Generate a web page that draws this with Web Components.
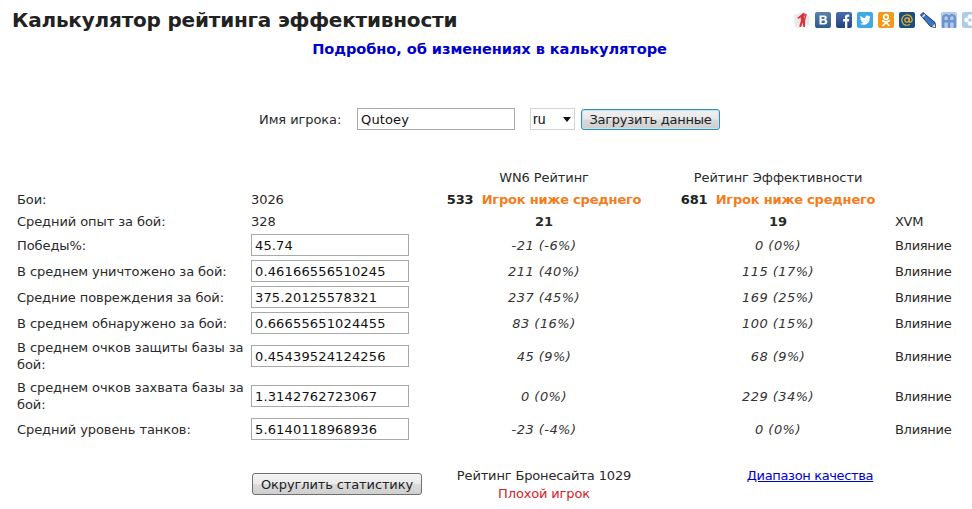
<!DOCTYPE html>
<html lang="ru">
<head>
<meta charset="utf-8">
<title>Калькулятор рейтинга эффективности</title>
<style>
  html, body { margin: 0; padding: 0; background: #fff; overflow: hidden; }
  body { font-family: "DejaVu Sans", Verdana, sans-serif; font-size: 13px; color: #2a2a2a; letter-spacing: -0.08px; }
</style>
</head>
<body>
<rating-page></rating-page>

<script>
const fieldCss = `
  .field {
    box-sizing: border-box;
    height: 22px;
    width: 158px;
    padding: 0 3px;
    border: 1px solid #a9a9a9;
    background: #fff;
    color: #111;
    font: 13px/20px "DejaVu Sans", Verdana, sans-serif;
    letter-spacing: 0.15px;
    outline: none;
  }
`;

const buttonCss = `
  button {
    box-sizing: border-box;
    height: 22px;
    padding: 0;
    border: 1px solid #707070;
    border-radius: 3px;
    background: linear-gradient(#f4f4f4 0%, #ebebeb 48%, #dbdbdb 52%, #cfcfcf 100%);
    color: #222;
    font: 13px "DejaVu Sans", Verdana, sans-serif;
    letter-spacing: -0.12px;
    white-space: nowrap;
  }
`;

class SocialBar extends HTMLElement {
  constructor() {
    super();
    this.attachShadow({ mode: 'open' });
  }

  connectedCallback() {
    this.shadowRoot.innerHTML = `
      <style>
        :host { display: flex; gap: 5px; flex: none; }
        svg { width: 16px; height: 16px; display: block; flex: none; }
      </style>
      <svg viewBox="0 0 16 16">
        <path d="M0 3 L10 0 L16 5 L15 13 L4 16 L1 15 Z" fill="#e9e9e9"/>
        <path d="M8 2 a1.6 1.6 0 1 1 2 2.2 L10 7 L11.5 1.5 L12.8 2 L11 9 L11 15 L9.2 15 L8.8 10.5 L7 15 L5.2 14.4 L7 8.5 L6.6 5.5 L4 7 L3.4 5.8 Z" fill="#d8343a"/>
      </svg>
      <svg viewBox="0 0 16 16">
        <defs><linearGradient id="vk" x1="0" y1="0" x2="0" y2="1"><stop offset="0" stop-color="#5b82ac"/><stop offset="1" stop-color="#2f5a8c"/></linearGradient></defs>
        <rect width="16" height="16" rx="2" fill="url(#vk)"/>
        <path d="M4.5 3.5 H9.5 C11.3 3.5 11.8 4.7 11.8 5.6 C11.8 6.5 11.3 7.2 10.6 7.5 C11.7 7.8 12.3 8.6 12.3 9.7 C12.3 11.2 11.2 12.5 9.4 12.5 H4.5 Z M6.6 5.1 V7 H8.8 C9.4 7 9.7 6.6 9.7 6 C9.7 5.5 9.4 5.1 8.8 5.1 Z M6.6 8.5 V10.9 H9 C9.7 10.9 10.1 10.4 10.1 9.7 C10.1 9 9.7 8.5 9 8.5 Z" fill="#fff"/>
      </svg>
      <svg viewBox="0 0 16 16">
        <defs><linearGradient id="fb" x1="0" y1="0" x2="0" y2="1"><stop offset="0" stop-color="#4a6db0"/><stop offset="1" stop-color="#26407f"/></linearGradient></defs>
        <rect width="16" height="16" rx="2" fill="url(#fb)"/>
        <path d="M9 16 V9.5 H7 V7 H9 V5.2 C9 3.4 10.1 2.4 11.7 2.4 H13.3 V4.7 H12.2 C11.5 4.7 11.3 5 11.3 5.6 V7 H13.2 L12.9 9.5 H11.3 V16 Z" fill="#fff"/>
      </svg>
      <svg viewBox="0 0 16 16">
        <rect width="16" height="16" rx="2" fill="#3fa9e6"/>
        <path d="M13.6 4.5 C13.2 4.7 12.8 4.8 12.3 4.9 C12.8 4.6 13.1 4.2 13.3 3.6 C12.9 3.9 12.4 4.1 11.9 4.2 C11.1 3.3 9.7 3.3 8.9 4.1 C8.3 4.7 8.1 5.4 8.3 6.2 C6.5 6.1 4.8 5.2 3.6 3.8 C3 4.9 3.3 6.2 4.3 6.9 C3.9 6.9 3.6 6.8 3.2 6.6 C3.2 7.8 4.1 8.8 5.2 9.1 C4.9 9.2 4.5 9.2 4.2 9.1 C4.5 10.1 5.4 10.8 6.5 10.8 C5.4 11.6 4.1 12 2.8 11.8 C6.6 14.2 13 12.3 12.6 6 C13 5.6 13.4 5.1 13.6 4.5 Z" fill="#fff"/>
      </svg>
      <svg viewBox="0 0 16 16">
        <rect width="16" height="16" rx="2" fill="#f39a1e"/>
        <g fill="none" stroke="#fff" stroke-width="1.7" stroke-linecap="round">
          <circle cx="8" cy="5" r="2.3"/>
          <path d="M4.8 8.7 C6.6 10 9.4 10 11.2 8.7"/>
          <path d="M8 10 V10.5 M8 10.5 L5 13.5 M8 10.5 L11 13.5"/>
        </g>
      </svg>
      <svg viewBox="0 0 16 16">
        <rect width="16" height="16" rx="2" fill="#174f7f"/>
        <circle cx="8" cy="8" r="2.1" fill="none" stroke="#f3b02e" stroke-width="1.2"/>
        <path d="M10.1 5.8 V9 C10.1 10.8 13.2 10.6 13.2 8 A5.2 5.2 0 1 0 11 12.3" fill="none" stroke="#f3b02e" stroke-width="1.2"/>
      </svg>
      <svg viewBox="0 0 16 16">
        <path d="M0.5 3 L3 0.5 L15 10.5 L15.5 15.5 L10.5 14.5 Z" fill="#3a76c4" stroke="#16335f" stroke-width="1"/>
        <path d="M2.5 5 L5 2.5" stroke="#dfe8f4" stroke-width="1.5"/>
        <path d="M12 14.6 L14.6 12 L15.5 15.5 Z" fill="#f4dcae"/>
      </svg>
      <svg viewBox="0 0 16 16">
        <rect width="16" height="16" rx="2" fill="#b4cbea"/>
        <path d="M1 16 V6 C1 3 3 2 5 2 C6.5 2 7.5 2.6 8 3.5 C8.5 2.6 9.5 2 11 2 C13 2 15 3 15 6 V16 H12.5 V10.5 H9.2 V16 H6.8 V10.5 H3.5 V16 Z M3.5 6 V8 H6.8 V6 C6.8 4.8 6 4.3 5 4.3 C4 4.3 3.5 4.8 3.5 6 Z M9.2 6 V8 H12.5 V6 C12.5 4.8 12 4.3 11 4.3 C10 4.3 9.2 4.8 9.2 6 Z" fill="#6f93cc"/>
      </svg>
      <svg viewBox="0 0 16 16">
        <rect width="16" height="16" rx="2" fill="#a8cdea"/>
        <g fill="#fff">
          <circle cx="8" cy="4.6" r="2.4"/><circle cx="8" cy="11.4" r="2.4"/>
          <circle cx="4.6" cy="8" r="2.4"/><circle cx="11.4" cy="8" r="2.4"/>
        </g>
        <circle cx="8" cy="8" r="1.5" fill="#a8cdea"/>
      </svg>
    `;
  }
}

class StatRow extends HTMLElement {
  constructor() {
    super();
    this.attachShadow({ mode: 'open' });
  }

  connectedCallback() {
    this.shadowRoot.innerHTML = `
      <style>
        :host {
          display: grid;
          grid-template-columns: 234px 158px 270px 198px 1fr;
          align-items: center;
          padding-left: 17px;
          min-height: 26px;
          line-height: 17px;
        }
        .center { text-align: center; white-space: nowrap; }
        .xvm { padding-left: 18px; white-space: nowrap; letter-spacing: -0.3px; }
      </style>
      <div><slot name="label"></slot></div>
      <div><slot name="value"></slot></div>
      <div class="center"><slot name="wn6"></slot></div>
      <div class="center"><slot name="eff"></slot></div>
      <div class="xvm"><slot name="extra"></slot></div>
    `;
  }
}

class StatField extends HTMLElement {
  constructor() {
    super();
    this.attachShadow({ mode: 'open' });
  }

  connectedCallback() {
    this.shadowRoot.innerHTML = `
      <style>
        :host { display: block; }
        ${fieldCss}
      </style>
      <input class="field" type="text" value="${this.getAttribute('value')}">
    `;
  }
}

class PlayerForm extends HTMLElement {
  constructor() {
    super();
    this.attachShadow({ mode: 'open' });
  }

  connectedCallback() {
    this.shadowRoot.innerHTML = `
      <style>
        :host { display: flex; align-items: center; padding-left: 259px; }
        ${fieldCss}
        ${buttonCss}
        label { width: 98px; flex: none; }
        select {
          appearance: none;
          box-sizing: border-box;
          width: 45px;
          height: 22px;
          margin: 0 6px 0 15px;
          padding: 0 0 0 2px;
          border: 1px solid #d4d4d4;
          border-radius: 0;
          background: #fff url("data:image/svg+xml,%3Csvg xmlns='http://www.w3.org/2000/svg' width='8' height='5'%3E%3Cpath d='M0 0H8L4 5Z' fill='%23111'/%3E%3C/svg%3E") no-repeat right 3px center;
          color: #111;
          font: 14px "Liberation Sans", Arial, sans-serif;
        }
        button {
          width: 139px;
          height: 21px;
          border: 1px solid #3a8db5;
          border-radius: 3px;
          box-shadow: inset 0 0 0 1px #bfe3f2;
          background: linear-gradient(#f0f0f0 0%, #e8e8e8 48%, #d9d9d9 52%, #cfcfcf 100%);
          letter-spacing: -0.25px;
        }
      </style>
      <label>Имя игрока:</label>
      <input class="field" type="text" value="Qutoey">
      <select><option>ru</option></select>
      <button type="button">Загрузить данные</button>
    `;
  }
}

class RatingFooter extends HTMLElement {
  constructor() {
    super();
    this.attachShadow({ mode: 'open' });
  }

  connectedCallback() {
    this.shadowRoot.innerHTML = `
      <style>
        :host {
          display: grid;
          grid-template-columns: 170px 244px 288px;
          align-items: start;
          padding-left: 252px;
          margin-top: 25px;
        }
        ${buttonCss}
        .round { padding-top: 6px; }
        .round button { width: 170px; }
        .info { text-align: center; line-height: 18px; letter-spacing: -0.15px; }
        .bad { color: #d8202a; }
        a { color: #0000cc; }
        .link { text-align: center; line-height: 18px; letter-spacing: -0.35px; }
      </style>
      <div class="round"><button type="button">Округлить статистику</button></div>
      <div class="info">Рейтинг Бронесайта 1029<div class="bad">Плохой игрок</div></div>
      <div class="link"><a href="#">Диапазон качества</a></div>
    `;
  }
}

class RatingPage extends HTMLElement {
  constructor() {
    super();
    this.attachShadow({ mode: 'open' });
  }

  connectedCallback() {
    this.shadowRoot.innerHTML = `
      <style>
        :host { display: block; width: 972px; height: 509px; overflow: hidden; }
        header {
          display: flex;
          justify-content: space-between;
          align-items: flex-start;
          width: 1000px;
          padding: 8px 0 0 12px;
          box-sizing: border-box;
        }
        h1 { margin: 0; font-size: 20px; line-height: 24px; font-weight: bold; color: #222; letter-spacing: -0.2px; }
        social-bar { margin: 4px 22px 0 0; }
        h2 {
          margin: 5px 0 0;
          text-align: center;
          width: 979px;
          font-size: 14.6px;
          line-height: 24px;
          font-weight: bold;
          color: #0000cc;
        }
        player-form { margin-top: 47px; }
        .rows { margin-top: 37px; }
        .two { min-height: 40px; }
        .thin { min-height: 22px; }
        .head { min-height: 21px; }
        b.rate { color: #222; margin-right: 4px; }
        b.tier { color: #f47c1c; letter-spacing: -0.2px; }
        i { color: #333; letter-spacing: 0.45px; }
      </style>
      <header>
        <h1>Калькулятор рейтинга эффективности</h1>
        <social-bar></social-bar>
      </header>
      <h2>Подробно, об изменениях в калькуляторе</h2>
      <player-form></player-form>
      <div class="rows">
        <stat-row class="head">
          <span slot="wn6">WN6 Рейтинг</span>
          <span slot="eff">Рейтинг Эффективности</span>
        </stat-row>
        <stat-row class="thin">
          <span slot="label">Бои:</span><span slot="value">3026</span>
          <span slot="wn6"><b class="rate">533</b> <b class="tier">Игрок ниже среднего</b></span>
          <span slot="eff"><b class="rate">681</b> <b class="tier">Игрок ниже среднего</b></span>
        </stat-row>
        <stat-row class="thin">
          <span slot="label">Средний опыт за бой:</span><span slot="value">328</span>
          <b slot="wn6">21</b><b slot="eff">19</b><span slot="extra">XVM</span>
        </stat-row>
        <stat-row>
          <span slot="label">Победы%:</span><stat-field slot="value" value="45.74"></stat-field>
          <i slot="wn6">-21 (-6%)</i><i slot="eff">0 (0%)</i><span slot="extra">Влияние</span>
        </stat-row>
        <stat-row>
          <span slot="label">В среднем уничтожено за бой:</span><stat-field slot="value" value="0.46166556510245"></stat-field>
          <i slot="wn6">211 (40%)</i><i slot="eff">115 (17%)</i><span slot="extra">Влияние</span>
        </stat-row>
        <stat-row>
          <span slot="label">Средние повреждения за бой:</span><stat-field slot="value" value="375.20125578321"></stat-field>
          <i slot="wn6">237 (45%)</i><i slot="eff">169 (25%)</i><span slot="extra">Влияние</span>
        </stat-row>
        <stat-row>
          <span slot="label">В среднем обнаружено за бой:</span><stat-field slot="value" value="0.66655651024455"></stat-field>
          <i slot="wn6">83 (16%)</i><i slot="eff">100 (15%)</i><span slot="extra">Влияние</span>
        </stat-row>
        <stat-row class="two">
          <span slot="label">В среднем очков защиты базы за бой:</span><stat-field slot="value" value="0.45439524124256"></stat-field>
          <i slot="wn6">45 (9%)</i><i slot="eff">68 (9%)</i><span slot="extra">Влияние</span>
        </stat-row>
        <stat-row class="two">
          <span slot="label">В среднем очков захвата базы за бой:</span><stat-field slot="value" value="1.3142762723067"></stat-field>
          <i slot="wn6">0 (0%)</i><i slot="eff">229 (34%)</i><span slot="extra">Влияние</span>
        </stat-row>
        <stat-row>
          <span slot="label">Средний уровень танков:</span><stat-field slot="value" value="5.6140118968936"></stat-field>
          <i slot="wn6">-23 (-4%)</i><i slot="eff">0 (0%)</i><span slot="extra">Влияние</span>
        </stat-row>
      </div>
      <rating-footer></rating-footer>
    `;
  }
}

customElements.define('social-bar', SocialBar);
customElements.define('stat-row', StatRow);
customElements.define('stat-field', StatField);
customElements.define('player-form', PlayerForm);
customElements.define('rating-footer', RatingFooter);
customElements.define('rating-page', RatingPage);
</script>
</body>
</html>
